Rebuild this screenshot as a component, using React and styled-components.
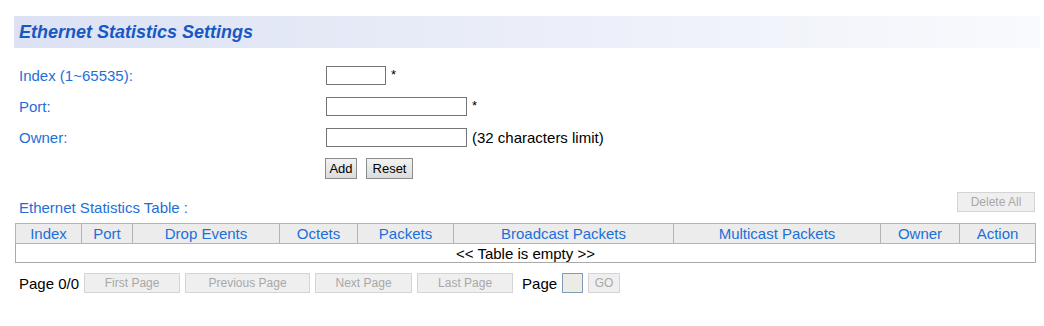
import styled, { createGlobalStyle } from "styled-components";

const GlobalStyle = createGlobalStyle`
  body {
    margin: 0;
    background: #ffffff;
    font-family: "Liberation Sans", Arial, sans-serif;
  }
`;

const Page = styled.div`
  padding: 16px 4px 0 14px;
  width: 1026px;
`;

const TitleBar = styled.div`
  height: 32px;
  padding-left: 5px;
  background: linear-gradient(to right, #dce2f4, #f9fafd);
  color: #1858c4;
  font-size: 18px;
  font-weight: bold;
  font-style: italic;
  line-height: 32px;
`;

const Form = styled.div`
  margin-top: 12px;
  padding-left: 5px;
  display: grid;
  grid-template-columns: 307px 1fr;
  grid-auto-rows: 31px;
`;

const Label = styled.div`
  display: flex;
  align-items: center;
  color: #1d6fd8;
  font-size: 15px;
`;

const Field = styled.div`
  display: flex;
  align-items: center;
  gap: 5px;
  font-size: 15px;
  color: #000;
`;

const Input = styled.input`
  box-sizing: border-box;
  width: ${(p) => p.$w}px;
  height: 19px;
  border: 1px solid #747474;
  padding: 0 2px;
  margin: 0;
  font-size: 13px;
`;

const Star = styled.span`
  font-size: 13px;
  margin-top: -2px;
`;

const ButtonRow = styled.div`
  margin-top: 5px;
  padding-left: 311px;
  display: flex;
  gap: 9px;
`;

const Button = styled.button`
  box-sizing: border-box;
  width: ${(p) => p.$w}px;
  height: 21px;
  padding: 0;
  font-family: "Liberation Sans", Arial, sans-serif;
  font-size: 13px;
  color: #000;
  background: linear-gradient(#f2f2f2, #dcdcdc);
  border: 1px solid #8c8c8c;
  border-radius: 0;
`;

const Disabled = styled.button`
  box-sizing: border-box;
  width: ${(p) => p.$w}px;
  height: 20px;
  padding: 0;
  font-family: "Liberation Sans", Arial, sans-serif;
  font-size: 12px;
  color: #a8a8a8;
  background: #efefef;
  border: 1px solid #d4d4d4;
  border-radius: 0;
`;

const TableHead = styled.div`
  margin-top: 13px;
  padding-left: 1px;
  width: 1020px;
  height: 28px;
  display: flex;
  justify-content: space-between;
  align-items: flex-start;
`;

const TableTitle = styled.div`
  align-self: flex-end;
  padding-left: 4px;
  color: #1d6fd8;
  font-size: 15px;
  line-height: 17px;
  padding-bottom: 4px;
`;

const Table = styled.table`
  margin: 3px 0 0 1px;
  width: 1020px;
  border-collapse: collapse;
  table-layout: fixed;
  border: 1px solid #a9a9a9;
  font-size: 15px;
`;

const Th = styled.th`
  height: 19px;
  padding: 0;
  background: #ececec;
  border: 1px solid #b4b4b4;
  color: #1d6fd8;
  font-weight: normal;
  text-align: center;
`;

const Td = styled.td`
  height: 18px;
  padding: 0;
  border: 1px solid #a9a9a9;
  color: #000;
  text-align: center;
`;

const Pager = styled.div`
  margin-top: 10px;
  padding-left: 5px;
  display: flex;
  align-items: center;
  gap: 5px;
  font-size: 15px;
  color: #000;
`;

const PageText = styled.span`
  margin: 0 ${(p) => p.$r || 0}px 0 ${(p) => p.$l || 0}px;
`;

const PageInput = styled.input`
  box-sizing: border-box;
  width: 21px;
  height: 20px;
  margin: 0;
  background: #ecebe4;
  border: 1px solid #7f9db9;
`;

const columns = [
  ["Index", 66],
  ["Port", 51],
  ["Drop Events", 147],
  ["Octets", 78],
  ["Packets", 96],
  ["Broadcast Packets", 220],
  ["Multicast Packets", 207],
  ["Owner", 79],
  ["Action", 76],
];

export default function App() {
  return (
    <>
      <GlobalStyle />
      <Page>
        <TitleBar>Ethernet Statistics Settings</TitleBar>

        <Form>
          <Label>Index (1~65535):</Label>
          <Field>
            <Input $w={60} />
            <Star>*</Star>
          </Field>
          <Label>Port:</Label>
          <Field>
            <Input $w={141} />
            <Star>*</Star>
          </Field>
          <Label>Owner:</Label>
          <Field>
            <Input $w={141} />
            (32 characters limit)
          </Field>
        </Form>

        <ButtonRow>
          <Button $w={32}>Add</Button>
          <Button $w={47}>Reset</Button>
        </ButtonRow>

        <TableHead>
          <TableTitle>Ethernet Statistics Table :</TableTitle>
          <Disabled $w={78}>Delete All</Disabled>
        </TableHead>

        <Table>
          <colgroup>
            {columns.map(([name, w]) => (
              <col key={name} style={{ width: w }} />
            ))}
          </colgroup>
          <thead>
            <tr>
              {columns.map(([name]) => (
                <Th key={name}>{name}</Th>
              ))}
            </tr>
          </thead>
          <tbody>
            <tr>
              <Td colSpan={9}>&lt;&lt; Table is empty &gt;&gt;</Td>
            </tr>
          </tbody>
        </Table>

        <Pager>
          <PageText>Page 0/0</PageText>
          <Disabled $w={96}>First Page</Disabled>
          <Disabled $w={125}>Previous Page</Disabled>
          <Disabled $w={97}>Next Page</Disabled>
          <Disabled $w={96}>Last Page</Disabled>
          <PageText $l={4}>Page</PageText>
          <PageInput />
          <Disabled $w={32}>GO</Disabled>
        </Pager>
      </Page>
    </>
  );
}
